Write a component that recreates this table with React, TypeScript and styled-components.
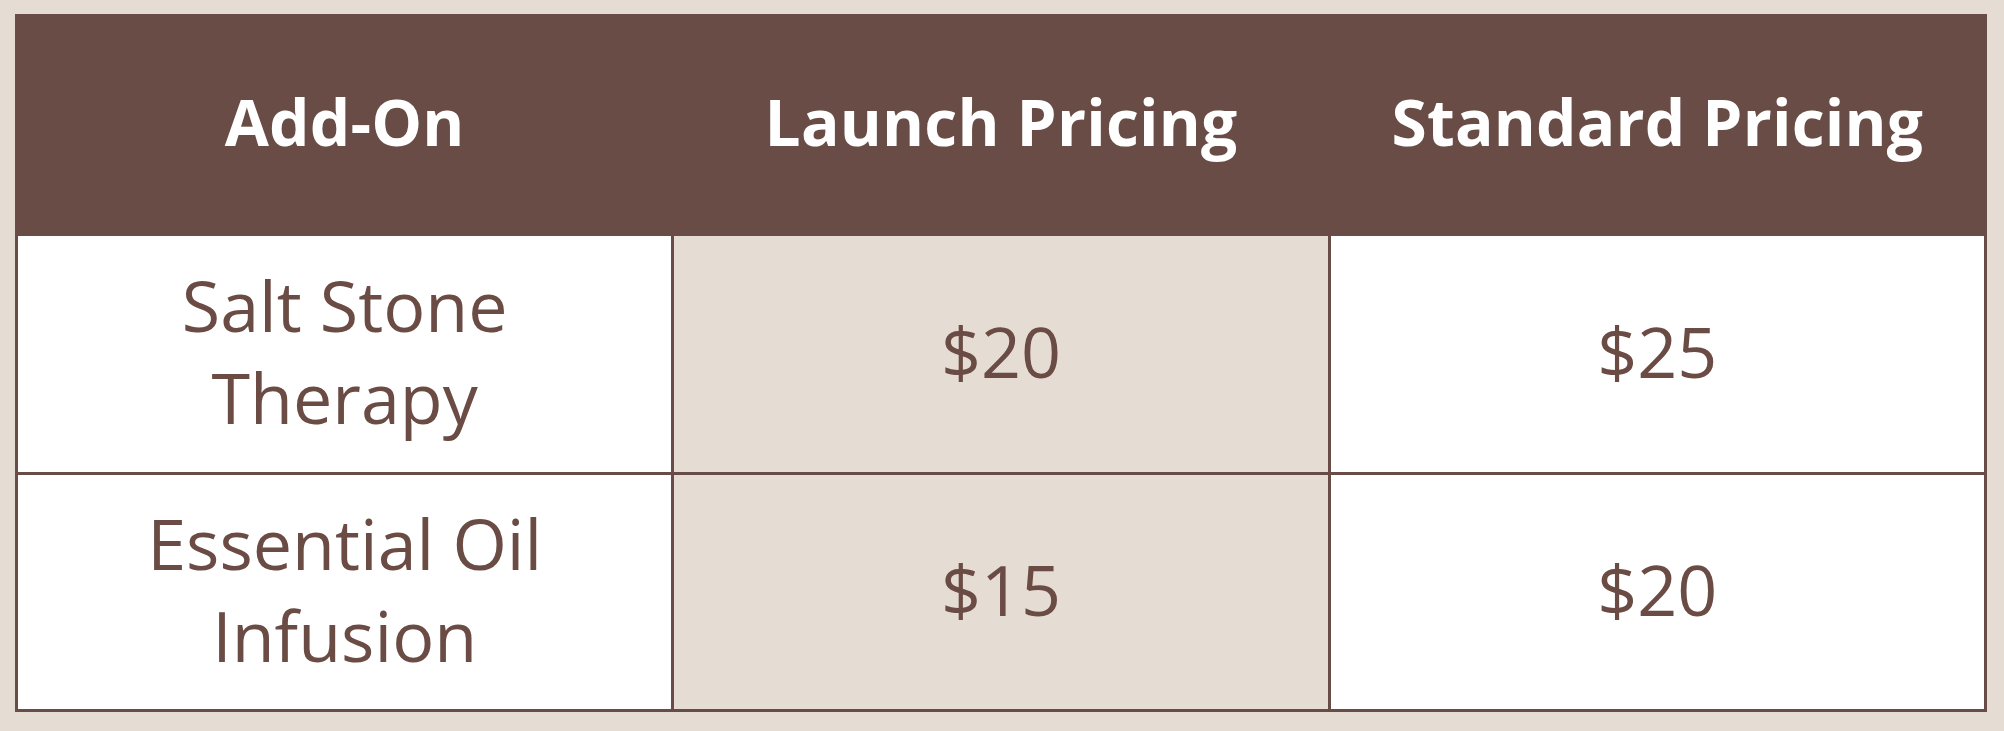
import { Fragment } from "react";
import styled, { createGlobalStyle } from "styled-components";

const GlobalStyle = createGlobalStyle`
  body {
    margin: 0;
    background: #e5ddd3;
  }
`;

const Page = styled.div`
  width: 2004px;
  height: 731px;
  box-sizing: border-box;
  padding: 14px 17px 18px 15px;
  background: #e5ddd3;
`;

const Table = styled.div`
  display: grid;
  grid-template-columns: repeat(3, 1fr);
  grid-template-rows: 216px 236px 234px;
  gap: 3px;
  border: 3px solid #684c45;
  background: #684c45;
  font-family: "Open Sans", "Noto Sans", sans-serif;
`;

const HeadCell = styled.div`
  display: flex;
  align-items: center;
  justify-content: center;
  background: #684c45;
  color: #ffffff;
  font-weight: 700;
  font-size: 64px;
  letter-spacing: 0.2px;
  padding-bottom: 8px;
`;

interface ICell {
  shaded?: boolean;
}

const Cell = styled.div<ICell>`
  display: flex;
  align-items: center;
  justify-content: center;
  text-align: center;
  background: ${(props) => (props.shaded ? "#e5ddd3" : "#ffffff")};
  color: #6b4c45;
  font-size: 70px;
  line-height: 92px;
  padding-bottom: 6px;
`;

const rows = [
  { name: ["Salt Stone", "Therapy"], launch: "$20", standard: "$25" },
  { name: ["Essential Oil", "Infusion"], launch: "$15", standard: "$20" },
];

export default function App() {
  return (
    <>
      <GlobalStyle />
      <Page>
        <Table>
          <HeadCell>Add-On</HeadCell>
          <HeadCell>Launch Pricing</HeadCell>
          <HeadCell>Standard Pricing</HeadCell>
          {rows.map((row) => (
            <Fragment key={row.name[0]}>
              <Cell>
                {row.name[0]}
                <br />
                {row.name[1]}
              </Cell>
              <Cell shaded>{row.launch}</Cell>
              <Cell>{row.standard}</Cell>
            </Fragment>
          ))}
        </Table>
      </Page>
    </>
  );
}
